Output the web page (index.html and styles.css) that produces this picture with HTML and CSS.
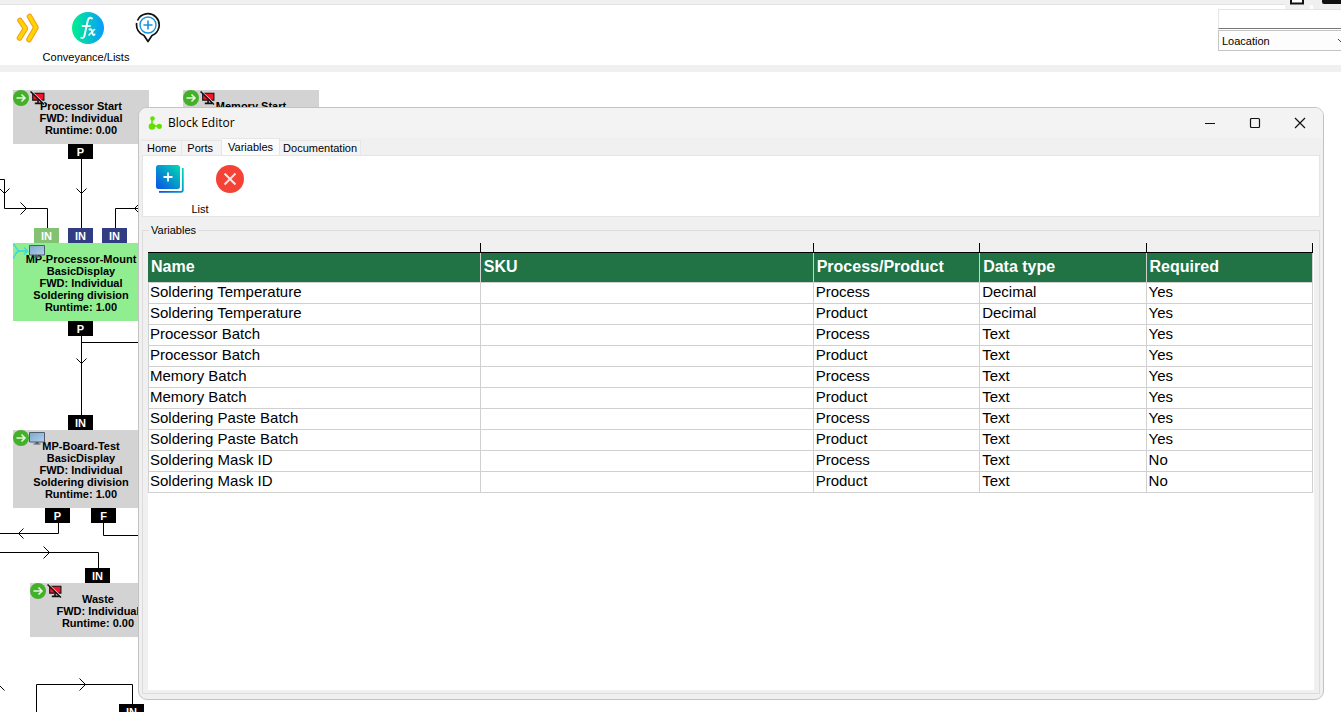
FILE: index.html
```html
<!DOCTYPE html>
<html lang="en">
<head>
<meta charset="utf-8">
<title>Block Editor</title>
<link rel="stylesheet" href="styles.css">
</head>
<body>
<svg class="defs" aria-hidden="true">
  <defs>
    <linearGradient id="fx-fill" x1="0" y1="0" x2="1" y2="0"><stop offset="0" stop-color="#00f08c"/><stop offset="1" stop-color="#0a9bff"/></linearGradient>
    <linearGradient id="list-fill" x1="0" y1="1" x2="1" y2="0"><stop offset="0" stop-color="#0a50e6"/><stop offset="1" stop-color="#00dcb4"/></linearGradient>
    <linearGradient id="screen-fill" x1="0" y1="0" x2="1" y2="1"><stop offset="0" stop-color="#7da7cc"/><stop offset="1" stop-color="#b4d0e8"/></linearGradient>
    <symbol id="go" viewBox="0 0 16 16"><circle cx="8" cy="8" r="8" fill="#43b02a"/><path d="M3.500 8h8.500M8.500 4.500 12 8l-3.500 3.500" fill="none" stroke="#e2f5dd" stroke-width="1.600"/></symbol>
    <symbol id="no-screen" viewBox="0 0 14 13"><path d="M2.500 2h10.500v6.500H2.500z" fill="#f5142d" stroke="#111"/><path d="M7.500 9v2M4.500 11.500h7" stroke="#111" stroke-width="1.500"/><path d="M1.500.3 13.500 11.500" stroke="#d3d3d3" stroke-width="1"/><path d="M.5.5 13 12.500" stroke="#111" stroke-width="1.400"/></symbol>
    <symbol id="screen" viewBox="0 0 16 13"><path d="M.5.5h15v9.500H.5z" fill="url(#screen-fill)" stroke="#4c5d70"/><path d="M6.500 10h3v1.500h2v1h-7v-1h2z" fill="#4c5d70"/></symbol>
  </defs>
</svg>

<div class="top-strip"></div>
<header class="toolbar">
  <div class="tool-group">
    <div class="tools">
      <button class="tool" aria-label="Conveyance">
        <svg width="26" height="32" viewBox="0 0 26 32"><g fill="none" stroke-linejoin="round" stroke-linecap="round"><path d="M5 8.500 10.500 16.500 4.500 26" stroke="#f29a1f" stroke-width="5.500"/><path d="M5 8.500 10.500 16.500 4.500 26" stroke="#ffd400" stroke-width="3.500"/><path d="M14.500 4.500 21 15.500 14 27.500" stroke="#f29a1f" stroke-width="5.500"/><path d="M14.500 4.500 21 15.500 14 27.500" stroke="#ffd400" stroke-width="3.500"/></g></svg>
      </button>
      <button class="tool" aria-label="Functions">
        <svg width="32" height="32" viewBox="0 0 32 32"><circle cx="16" cy="16" r="16" fill="url(#fx-fill)"/><g fill="none" stroke="#f2fffb" stroke-linecap="round"><path d="M20 6.500c-2-1.500-3.500-.5-4.200 2L12.500 23.500c-.6 2.300-1.800 3-3.300 2.200" stroke-width="2"/><path d="M10.500 14h7.500" stroke-width="1.800"/><path d="M17.500 17.500c2-.7 2 0 2.500 2l.7 2.500c.4 1.200 1 1.200 1.800.5" stroke-width="2"/><path d="M22.500 17.500 17 23" stroke-width="1.600"/></g></svg>
      </button>
      <button class="tool" aria-label="Add location">
        <svg width="28" height="32" viewBox="0 0 28 32"><path d="M3.500 8.500A11.300 11.300 0 1 1 18 23.500L14 29.500l-4-6A11.300 11.300 0 0 1 2.700 11" fill="none" stroke="#111" stroke-width="1.700" stroke-linejoin="round"/><circle cx="14" cy="13" r="8" fill="none" stroke="#1993e0" stroke-width="1.400"/><path d="M14 8.500v9M9.500 13h9" stroke="#1993e0" stroke-width="1.600"/></svg>
      </button>
    </div>
    <div class="group-label">Conveyance/Lists</div>
  </div>
  <div class="search">
    <input class="search-input" type="text" aria-label="Search">
    <select class="search-select" aria-label="Search field"><option>Loacation</option></select>
    <svg class="chevron" width="10" height="6" viewBox="0 0 10 6" aria-hidden="true"><path d="M1 1l4 4 4-4" fill="none" stroke="#444"/></svg>
  </div>
  <svg class="corner" width="56" height="9" viewBox="0 0 56 9" aria-hidden="true"><path d="M0 0h56v9H28V5h-3v4H0z" fill="#f0f0f0"/><path d="M6-8h12v11.500H6z" fill="#fff" stroke="#111" stroke-width="2"/><rect x="37" y="-8" width="30" height="12" rx="2" fill="#111"/></svg>
</header>

<main class="canvas">
  <svg class="wires" aria-hidden="true">
    <g transform="translate(.5 -71.500)">
      <path d="M81 158v70M-1 179h5v29h43v20M139 208h-24v20M81 335v80M81 342h58M58 522v11H-1M103 522v13h36M-1 552h99v16M36 713v-29h96v20"/>
      <path d="M76 188l5 5 5-5M-1 188l5 5 5-5M20 202l6 6-6 6M139 203l-5 5 5 5M76 358l5 5 5-5M23 528l-5 5 5 5M43 546l6 6-6 6M79 678l6 6-6 6M-1 685l5 5"/>
    </g>
  </svg>

  <section class="node n-start"><svg class="go"><use href="#go"/></svg><svg class="off"><use href="#no-screen"/></svg>Processor Start<br>FWD: Individual<br>Runtime: 0.00</section>
  <section class="node n-memory"><svg class="go"><use href="#go"/></svg><svg class="off"><use href="#no-screen"/></svg>Memory Start</section>
  <section class="node n-mount"><svg class="merge" viewBox="0 0 16 16"><path d="M0 1.500c3 0 3 6 6.500 6.500h8M11 4.500 14.500 8 11 11.500M0 15.500C2 14 2 8.500 6.500 8" fill="none" stroke="#35d6ea" stroke-width="1.300"/></svg><svg class="on"><use href="#screen"/></svg>MP-Processor-Mount<br>BasicDisplay<br>FWD: Individual<br>Soldering division<br>Runtime: 1.00</section>
  <section class="node n-test"><svg class="go"><use href="#go"/></svg><svg class="on"><use href="#screen"/></svg>MP-Board-Test<br>BasicDisplay<br>FWD: Individual<br>Soldering division<br>Runtime: 1.00</section>
  <section class="node n-waste"><svg class="go"><use href="#go"/></svg><svg class="off"><use href="#no-screen"/></svg>Waste<br>FWD: Individual<br>Runtime: 0.00</section>

  <span class="port p-start">P</span>
  <span class="port p-in1">IN</span>
  <span class="port p-in2">IN</span>
  <span class="port p-in3">IN</span>
  <span class="port p-mount">P</span>
  <span class="port p-test-in">IN</span>
  <span class="port p-test-p">P</span>
  <span class="port p-test-f">F</span>
  <span class="port p-waste">IN</span>
  <span class="port p-last">IN</span>
</main>

<div class="window" role="dialog" aria-labelledby="window-title">
  <div class="titlebar">
    <svg width="14" height="14" viewBox="0 0 14 14" aria-hidden="true"><path d="M4 3v7h7" fill="none" stroke="#62e000" stroke-width="1.500"/><circle cx="4.500" cy="2.500" r="2.300" fill="#62e000"/><circle cx="4" cy="10.500" r="3.300" fill="#62e000"/><circle cx="11.300" cy="10.300" r="2.600" fill="#62e000"/></svg>
    <h1 class="title" id="window-title">Block Editor</h1>
    <button class="caption" aria-label="Minimize"><svg width="12" height="12" viewBox="0 0 12 12"><path d="M1 6.500h10" stroke="#111"/></svg></button>
    <button class="caption" aria-label="Maximize"><svg width="12" height="12" viewBox="0 0 12 12"><rect x="1.500" y="1.500" width="9" height="9" rx="1" fill="none" stroke="#111" stroke-width="1.200"/></svg></button>
    <button class="caption" aria-label="Close"><svg width="12" height="12" viewBox="0 0 12 12"><path d="M1 1l10 10M11 1 1 11" stroke="#111" stroke-width="1.200"/></svg></button>
  </div>
  <div class="tabs" role="tablist">
    <button class="tab" role="tab">Home</button>
    <button class="tab tab-ports" role="tab">Ports</button>
    <button class="tab selected" role="tab" aria-selected="true">Variables</button>
    <button class="tab" role="tab">Documentation</button>
  </div>
  <div class="ribbon">
    <div class="tool-group">
      <div class="tools">
        <button class="tool" aria-label="Add variable"><svg width="28" height="28" viewBox="0 0 28 28"><rect width="24" height="24" rx="2.500" fill="url(#list-fill)"/><path d="M3 26.800h22q1.800 0 1.800-1.800V3" fill="none" stroke="url(#list-fill)" stroke-width="1.800"/><path d="M12 7.500v9M7.500 12h9" stroke="#fff" stroke-width="1.800"/></svg></button>
        <button class="tool" aria-label="Remove variable"><svg width="28" height="28" viewBox="0 0 28 28"><circle cx="14" cy="14" r="14" fill="#f44336"/><path d="M8.500 8.500l11 11M19.500 8.500l-11 11" stroke="#fbe4e2" stroke-width="2"/></svg></button>
      </div>
      <div class="group-label">List</div>
    </div>
  </div>
  <fieldset class="panel">
    <legend>Variables</legend>
    <div class="sheet">
      <table>
        <colgroup><col class="wide"><col class="wide"><col><col><col></colgroup>
        <thead>
          <tr class="ruler" aria-hidden="true"><td></td><td></td><td></td><td></td><td></td></tr>
          <tr><th scope="col">Name</th><th scope="col">SKU</th><th scope="col">Process/Product</th><th scope="col">Data type</th><th scope="col">Required</th></tr>
        </thead>
        <tbody>
          <tr><td>Soldering Temperature</td><td></td><td>Process</td><td>Decimal</td><td>Yes</td></tr>
          <tr><td>Soldering Temperature</td><td></td><td>Product</td><td>Decimal</td><td>Yes</td></tr>
          <tr><td>Processor Batch</td><td></td><td>Process</td><td>Text</td><td>Yes</td></tr>
          <tr><td>Processor Batch</td><td></td><td>Product</td><td>Text</td><td>Yes</td></tr>
          <tr><td>Memory Batch</td><td></td><td>Process</td><td>Text</td><td>Yes</td></tr>
          <tr><td>Memory Batch</td><td></td><td>Product</td><td>Text</td><td>Yes</td></tr>
          <tr><td>Soldering Paste Batch</td><td></td><td>Process</td><td>Text</td><td>Yes</td></tr>
          <tr><td>Soldering Paste Batch</td><td></td><td>Product</td><td>Text</td><td>Yes</td></tr>
          <tr><td>Soldering Mask ID</td><td></td><td>Process</td><td>Text</td><td>No</td></tr>
          <tr><td>Soldering Mask ID</td><td></td><td>Product</td><td>Text</td><td>No</td></tr>
        </tbody>
      </table>
    </div>
  </fieldset>
</div>
</body>
</html>
```
FILE: styles.css
```css
* { box-sizing: border-box; }
body {
  margin: 0;
  height: 100vh;
  display: flex;
  flex-direction: column;
  position: relative;
  overflow: hidden;
  background: #fff;
  color: #000;
  font: 11px/14px "Liberation Sans", Arial, sans-serif;
}
button { border: 0; padding: 0; background: none; font: inherit; color: inherit; }
svg { display: block; flex: none; }
.defs { position: absolute; width: 0; height: 0; }

.top-strip { height: 5px; background: #f0f0f0; border-bottom: 1px solid #e3e3e3; flex: none; }
.toolbar {
  display: flex;
  justify-content: space-between;
  flex: none;
  padding-top: 4px;
  background: #fff;
  border-bottom: 7px solid #f0f0f0;
}
.tool-group { display: flex; flex-direction: column; align-items: center; }
.tools { display: flex; }
.tool { width: 60px; height: 38px; display: flex; align-items: center; justify-content: center; }
.group-label { font-size: 11px; line-height: 14px; }
.toolbar .tool-group { margin-left: -2px; padding-bottom: 1px; }
.toolbar .tools { width: 176px; }
.toolbar .tool { flex: none; }
.toolbar .group-label { padding-top: 3px; }
.search { position: relative; display: flex; flex-direction: column; gap: 1px; width: 123px; }
.search-input {
  width: 128px; height: 20px;
  border: 1px solid #e5e5e5;
  border-bottom-color: #777;
  background: #fff;
}
.search-select {
  appearance: none;
  width: 128px; height: 21px;
  border: 1px solid #c4c4c4;
  background: #fdfdfd;
  padding: 0 3px;
  color: #000;
  font: 11px/14px "Liberation Sans", Arial, sans-serif;
}
.chevron { position: absolute; right: -6px; top: 29px; }
.corner { position: absolute; top: 0; right: 0; }

.canvas { flex: 1; position: relative; overflow: hidden; }
.wires { position: absolute; inset: 0; width: 100%; height: 100%; fill: none; stroke: #000; }
.node {
  position: absolute;
  width: 136px;
  min-height: 54px;
  padding: 10px 0 8px;
  background: #d3d3d3;
  font-weight: bold;
  font-size: 11px;
  line-height: 12px;
  text-align: center;
  white-space: nowrap;
}
.node svg { position: absolute; top: 0; }
.go { left: 0; width: 16px; height: 16px; }
.off { left: 17px; width: 15px; height: 14px; margin-top: 1px; }
.on { left: 16px; width: 16px; height: 13px; margin-top: 2px; }
.merge { left: 0; width: 16px; height: 16px; }
.n-start { left: 13px; top: 18px; }
.n-memory { left: 183px; top: 18px; }
.n-mount { left: 13px; top: 171px; background: #90ee90; }
.n-test { left: 13px; top: 358px; }
.n-waste { left: 30px; top: 511px; }
.port {
  position: absolute;
  width: 25px;
  height: 15px;
  background: #000;
  color: #fff;
  font-weight: bold;
  font-size: 11px;
  line-height: 16px;
  text-align: center;
}
.p-start { left: 68px; top: 72px; }
.p-in1 { left: 34px; top: 156px; background: #82c272; }
.p-in2 { left: 68px; top: 156px; background: #323c82; }
.p-in3 { left: 102px; top: 156px; background: #323c82; }
.p-mount { left: 68px; top: 249px; }
.p-test-in { left: 68px; top: 343px; }
.p-test-p { left: 45px; top: 436px; }
.p-test-f { left: 91px; top: 436px; }
.p-waste { left: 85px; top: 496px; }
.p-last { left: 119px; top: 632px; }

.window {
  position: absolute;
  left: 138px; top: 107px; right: 17px; bottom: 12px;
  display: flex;
  flex-direction: column;
  border: 1px solid #c3c3c3;
  border-radius: 9px;
  background: #f0f0f0;
  padding: 0 3px 5px;
  overflow: hidden;
}
.titlebar {
  display: flex;
  align-items: center;
  height: 30px;
  flex: none;
  margin: 0 -3px;
  padding: 0 1px 0 9px;
  background: #f3f3f3;
}
.title { flex: 1; margin: 0 0 0 6px; font: 12px/16px "Open Sans", "Noto Sans", sans-serif; }
.caption { width: 45px; height: 28px; padding-bottom: 1px; display: flex; align-items: center; justify-content: center; }
.tabs { display: flex; align-items: flex-end; height: 17px; flex: none; }
.tab {
  height: 15px;
  padding: 1px 5px 0;
  border: 1px solid #e6e6e6;
  border-width: 1px 1px 0 0;
  background: #f3f3f3;
  line-height: 13px;
}
.tab-ports { padding-right: 8px; }
.tab.selected { height: 17px; padding: 0 6px; background: #fcfcfc; }
.tab:last-child { padding: 1px 3px 0; }
.ribbon {
  display: flex;
  flex: none;
  border: 1px solid #e5e5e5;
  background: #fff;
}
.ribbon .tool-group { margin-left: -3px; }
.ribbon .tool { height: 46px; }
.panel {
  flex: 1;
  min-width: 0;
  min-height: 0;
  margin: 6px 0 0;
  padding: 6px 5px 3px;
  border: 1px solid #dcdcdc;
  display: flex;
  flex-direction: column;
}
.panel legend { margin-left: 1px; padding: 0 2px; line-height: 14px; }
.sheet { flex: 1; background: #fff; padding-right: 1px; }
table {
  width: 100%;
  table-layout: fixed;
  border-collapse: separate;
  border-spacing: 0;
  font-size: 15px;
  line-height: 18px;
}
col.wide { width: calc(100% * 2 / 7); }
td, th { padding: 0 2px; text-align: left; border-right: 1px solid #d0d0d0; border-bottom: 1px solid #d0d0d0; }
td { height: 21px; vertical-align: top; }
td:first-child { border-left: 1px solid #d0d0d0; padding-left: 1px; }
th {
  height: 30px;
  padding: 0 3px 2px;
  background: #217346;
  color: #fff;
  font-size: 16px;
}
.ruler td, .ruler td:first-child { height: 10px; padding: 0; line-height: 0; background: #f0f0f0; border: 0 solid #000; border-width: 0 1px 1px 0; }
```
